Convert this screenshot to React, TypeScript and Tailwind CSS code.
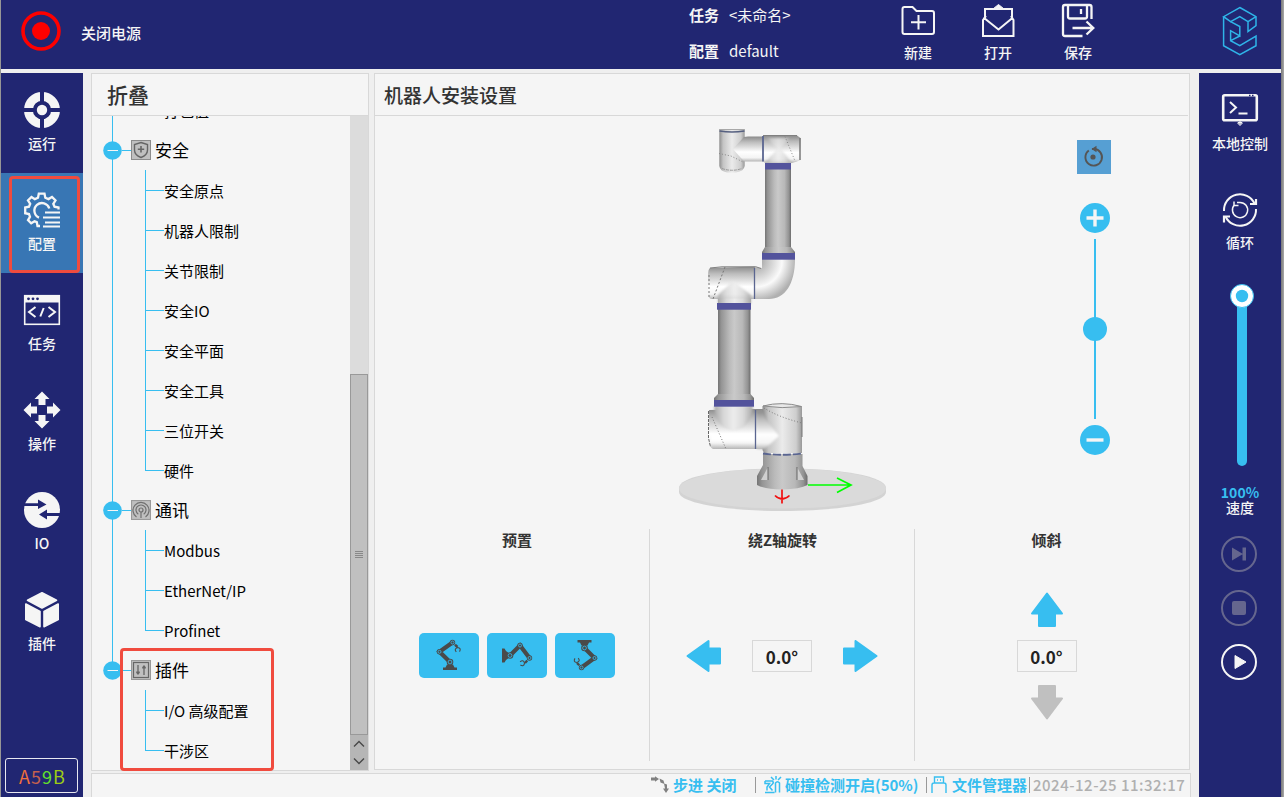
import React from "react";

const CYAN = "#37bef0";

/* ---------- left navigation ---------- */

const RunIcon = () => (
  <svg width="38" height="38" viewBox="0 0 38 38">
    <circle cx="19" cy="19" r="13.6" fill="none" stroke="#f5f5f5" strokeWidth="8.8" />
    <path d="M19 0V38M0 19H38" stroke="#212672" strokeWidth="4" />
    <circle cx="19" cy="19" r="5.2" fill="#f5f5f5" />
  </svg>
);

const GearListIcon = () => (
  <svg width="38" height="38" viewBox="0 -1 38 38" fill="none" stroke="#f5f5f5" strokeWidth="2.3">
    <path d="M17 35.500H14.500L13.800 31.700L11.500 30.800L8.200 32.800L5 29.600L7 26.300L6 23.500L2.200 22.700V17L6 16.200L7.200 13.300L5 10L8.500 6.500L11.800 8.600L15 7.200L15.800 3.200H21.500L22.300 7.200L25.500 8.600L29 6.500L32.500 10L30.300 13.300L31.500 16.200L35.500 17V19" transform="translate(0 -1.500)" />
    <path d="M16 25.600A7.600 7.600 0 1 1 26.300 16.500" />
    <path d="M22 20.500H37M20 25.500H37M22 30.500H37M20 34.500H37" strokeWidth="2" />
  </svg>
);

const CodeIcon = () => (
  <svg width="38" height="38" viewBox="0 0 38 38" fill="none" stroke="#f5f5f5">
    <rect x="1.700" y="4.700" width="34.600" height="28.600" strokeWidth="1.600" />
    <path d="M1 4H37V11.500H1Z" fill="#f5f5f5" stroke="none" />
    <g fill="#212672" stroke="none">
      <circle cx="5.500" cy="7.800" r="1.400" />
      <circle cx="10" cy="7.800" r="1.400" />
      <circle cx="14.500" cy="7.800" r="1.400" />
    </g>
    <path d="M12.500 16L6 21L12.500 26M25.500 16L32 21L25.500 26M20.700 17L17.300 25.500" strokeWidth="2" />
  </svg>
);

const MoveIcon = () => (
  <svg width="38" height="38" viewBox="0 0 38 38" fill="#f5f5f5">
    <path d="M19 .5L26.500 8H22.500V14H15.500V8H11.500ZM19 37.500L11.500 30H15.500V24H22.500V30H26.500ZM.5 19L8 11.500V15.500H14V22.500H8V26.500ZM37.500 19L30 26.500V22.500H24V15.500H30V11.500Z" />
  </svg>
);

const IoIcon = () => (
  <svg width="38" height="38" viewBox="0 0 38 38">
    <circle cx="19" cy="19" r="18" fill="#f5f5f5" />
    <path d="M0 12.300H15V8.500L23.500 13.500L15 18V15H0ZM38 25H24V28.500L16 23.500L24 18.500V22H38Z" fill="#212672" />
  </svg>
);

const CubeIcon = () => (
  <svg width="38" height="38" viewBox="0 0 38 38" fill="#f5f5f5" stroke="#f5f5f5" strokeWidth="1.600" strokeLinejoin="round">
    <path d="M19 1.800L33.500 9.300L19 17L4.500 9.300Z" />
    <path d="M2.800 13L17 20.500V35.800L2.800 28.500ZM35.200 13L21 20.500V35.800L35.200 28.500Z" />
  </svg>
);

const navItems = [
  { label: "运行", icon: <RunIcon /> },
  { label: "配置", icon: <GearListIcon />, active: true },
  { label: "任务", icon: <CodeIcon /> },
  { label: "操作", icon: <MoveIcon /> },
  { label: "IO", icon: <IoIcon /> },
  { label: "插件", icon: <CubeIcon /> },
];

function LeftNav() {
  return (
    <nav className="flex w-[82px] shrink-0 flex-col bg-[#212672]">
      {navItems.map((n) => (
        <div
          key={n.label}
          className={
            n.active
              ? "relative flex h-[100px] flex-col items-center bg-[#3876b4] pt-[18px]"
              : "relative flex h-[100px] flex-col items-center pt-[18px]"
          }
        >
          {n.icon}
          <span className="mt-1 text-sm leading-5 font-medium text-[#f5f5f5]">{n.label}</span>
          {n.active && <div className="absolute top-[3px] left-2 h-[97px] w-[71px] rounded border-3 border-[#f04b3e]" />}
        </div>
      ))}
      <div className="mt-[85px] ml-1 flex h-[35px] w-[73px] items-center justify-center rounded-[3px] border border-[#e8e8f0] pt-0.5 pl-0.5 text-[18px] tracking-[1px]">
        <span className="text-[#f2703a]">A</span>
        <span className="text-[#c4604e]">5</span>
        <span className="text-[#62e02c]">9</span>
        <span className="text-[#9ccc14]">B</span>
      </div>
    </nav>
  );
}

/* ---------- header ---------- */

const NewIcon = () => (
  <svg width="40" height="40" viewBox="0 0 40 40" fill="none" stroke="#f5f5f5" strokeWidth="2">
    <path d="M4.500 9Q4.500 7 6.500 7H14.500L18.500 11H34Q36 11 36 13V32Q36 34 34 34H6.500Q4.500 34 4.500 32Z" />
    <path d="M20.500 15V29.500M13 22.300H28" />
  </svg>
);

const OpenIcon = () => (
  <svg width="40" height="40" viewBox="0 0 40 40" fill="none" stroke="#f5f5f5" strokeWidth="2">
    <path d="M7 20V9H34V20" />
    <path d="M15.500 8.500L20.500 4.500L25.500 8.500Z" fill="#f5f5f5" strokeWidth="1" />
    <path d="M8 16L5 20V36H35.500V20L33 16M5.500 17.500L20.500 29.500L35 17.500" />
  </svg>
);

const SaveIcon = () => (
  <svg width="40" height="40" viewBox="0 0 40 40" fill="none" stroke="#f5f5f5" strokeWidth="2.300">
    <path d="M24.500 36H7Q5 36 5 34V7Q5 5 7 5H31.500Q33.500 5 33.500 7V19" />
    <path d="M10 5.500V16.500Q10 18.500 12 18.500H27Q29 18.500 29 16.500V5.500M23 9V14" />
    <path d="M14.500 28H35M28.500 21.500L35.300 28L28.500 34.500" />
  </svg>
);

const Logo = () => (
  <svg width="36" height="52" viewBox="1222 5 36 52" fill="none" stroke="#2fb4e8" strokeWidth="1.500">
    <path d="M1239.800 7.500L1256 16.700V25.500L1248 31.500V21.700L1239.800 16.700L1230.600 21.700L1223.600 16.700Z" />
    <path d="M1256 16.700L1248 21.700M1230.600 21.700L1239.800 26.500V36L1230.600 30.700V40.700L1239.800 45.700L1256 36V45.700L1239.800 54.700L1223.600 45.700V16.700M1230.600 40.700L1239.800 36" />
  </svg>
);

function Header() {
  return (
    <header className="flex h-[69px] w-[1280px] shrink-0 bg-[#212672] text-[15px] text-[#f5f5f5]">
      <svg className="mt-[10px] ml-[19px] shrink-0" width="42" height="42" viewBox="0 0 42 42">
        <circle cx="21" cy="21" r="18" fill="none" stroke="#fe0000" strokeWidth="3.600" />
        <circle cx="21" cy="21" r="9" fill="#fe0000" />
      </svg>
      <span className="mt-[21px] ml-[19px] w-[608px] shrink-0 leading-6 font-medium">关闭电源</span>
      <div className="flex w-[190px] shrink-0 flex-col gap-3 pt-[3px] leading-6">
        <div className="flex gap-[10px]">
          <b>任务</b>
          <span>&lt;未命名&gt;</span>
        </div>
        <div className="flex gap-[10px]">
          <b>配置</b>
          <span>default</span>
        </div>
      </div>
      <div className="-ml-px flex">
        {[
          { t: "新建", i: <NewIcon /> },
          { t: "打开", i: <OpenIcon /> },
          { t: "保存", i: <SaveIcon /> },
        ].map((b) => (
          <div key={b.t} className="flex w-20 shrink-0 flex-col items-center">
            {b.i}
            <span className="mt-0.5 text-sm leading-5 font-medium">{b.t}</span>
          </div>
        ))}
      </div>
      <div className="mt-[5px] ml-[104px]">
        <Logo />
      </div>
    </header>
  );
}

/* ---------- configuration tree ---------- */

const ShieldIcon = () => (
  <svg width="20" height="20" viewBox="0 0 20 20" fill="none" stroke="#666">
    <rect x=".5" y=".5" width="19" height="19" fill="#c0c0c0" stroke="#8c8c8c" />
    <path d="M10 2.500L16.500 4.500V10Q16.500 15 10 17.500Q3.500 15 3.500 10V4.500Z" strokeWidth="1.400" />
    <path d="M10 6V12.500M6.800 9.300H13.200" strokeWidth="1.600" />
  </svg>
);

const AntennaIcon = () => (
  <svg width="20" height="20" viewBox="0 0 20 20" fill="none" stroke="#707070" strokeWidth="1.200">
    <rect x=".5" y=".5" width="19" height="19" fill="#c0c0c0" stroke="#9a9a9a" />
    <circle cx="10" cy="10" r="2" />
    <path d="M7.300 14.200A5 5 0 1 1 12.700 14.200M5.500 17A8 8 0 1 1 14.500 17M10 12V18" />
  </svg>
);

const SlidersIcon = () => (
  <svg width="20" height="20" viewBox="0 0 20 20" fill="none" stroke="#666">
    <rect x=".5" y=".5" width="19" height="19" fill="#c0c0c0" stroke="#999" />
    <rect x="2.500" y="2.500" width="15" height="15" strokeWidth="1.200" />
    <path d="M7 5V14.500M13 5.500V15" strokeWidth="1.300" />
    <path d="M5.200 11.500H8.800V13L7 14.500L5.200 13ZM11.200 8.500H14.800V7L13 5.500L11.200 7Z" fill="#666" stroke="none" />
  </svg>
);

type SectionProps = { title: string; icon: React.ReactNode; items: string[]; last?: boolean };

function TreeSection({ title, icon, items, last }: SectionProps) {
  return (
    <div className={last ? "ml-5 border-l border-transparent" : "ml-5 border-l border-[#37bef0]"}>
      <div className="relative flex h-10 items-center">
        {last && <div className="absolute top-0 -left-px h-5 w-px bg-[#37bef0]" />}
        <svg className="relative mt-px -ml-[10px]" width="19" height="19" viewBox="0 0 19 19">
          <circle cx="9.500" cy="9.500" r="9.300" fill={CYAN} />
          <path d="M4.500 9.500H15" stroke="#f5f5f5" />
        </svg>
        <div className="mt-px h-px w-[9px] bg-[#37bef0]" />
        {icon}
        <span className="ml-1 text-[17px] leading-6">{title}</span>
      </div>
      {items.map((t, i) => (
        <div key={t} className="flex h-10 pl-8">
          <div className="w-[19px] shrink-0">
            <div className="h-[21px] border-b border-l border-[#37bef0]" />
            {i < items.length - 1 && <div className="h-[19px] border-l border-[#37bef0]" />}
          </div>
          <span className="text-[15px] leading-[41px]">{t}</span>
        </div>
      ))}
    </div>
  );
}

function TreePanel() {
  return (
    <section className="flex h-[698px] w-[278px] shrink-0 flex-col border border-[#d8d8d8] bg-[#f5f5f5]">
      <h2 className="h-[42px] shrink-0 border-b border-[#d8d8d8] pl-[15px] text-[21px] leading-[40px] font-medium text-[#333]">折叠</h2>
      <div className="flex min-h-0 flex-1">
        <div className="relative min-w-0 flex-1">
          <div className="h-full overflow-hidden text-black">
            <div className="-mt-[26px]">
              <div className="ml-5 h-10 border-l border-[#37bef0] pl-[51px] text-[15px] leading-[41px]">打包值</div>
              <TreeSection
                title="安全"
                icon={<ShieldIcon />}
                items={["安全原点", "机器人限制", "关节限制", "安全IO", "安全平面", "安全工具", "三位开关", "硬件"]}
              />
              <TreeSection title="通讯" icon={<AntennaIcon />} items={["Modbus", "EtherNet/IP", "Profinet"]} />
              <TreeSection title="插件" icon={<SlidersIcon />} items={["I/O 高级配置", "干涉区"]} last />
            </div>
          </div>
          <div className="absolute top-[532px] left-7 h-[123px] w-[154px] rounded border-3 border-[#f04b3e]" />
        </div>
        <div className="flex w-[18px] shrink-0 flex-col bg-[#dcdcdc]">
          <div className="mt-[258px] flex h-[361px] flex-col items-center justify-center gap-px border border-[#999] bg-[#c0c0c0]">
            <div className="h-px w-2 bg-[#888]" />
            <div className="h-px w-2 bg-[#888]" />
            <div className="h-px w-2 bg-[#888]" />
            <div className="h-px w-2 bg-[#888]" />
          </div>
          <svg width="18" height="35" viewBox="0 0 18 35" className="bg-[#b6b6b6]" fill="none" stroke="#484848" strokeWidth="1.400">
            <path d="M4 11.500L9 6.500L14 11.500M4 23.500L9 28.500L14 23.500" />
          </svg>
        </div>
      </div>
    </section>
  );
}

/* ---------- robot view ---------- */

const Robot = () => (
  <svg width="230" height="400" viewBox="670 120 230 400" className="shrink-0">
    <defs>
      <linearGradient id="tube">
        <stop offset="0" stopColor="#747474" />
        <stop offset=".1" stopColor="#949494" />
        <stop offset=".35" stopColor="#bababa" />
        <stop offset=".5" stopColor="#c9c9c9" />
        <stop offset=".75" stopColor="#b8b8b8" />
        <stop offset=".92" stopColor="#929292" />
        <stop offset="1" stopColor="#6c6c6c" />
      </linearGradient>
      <linearGradient id="shellX">
        <stop offset="0" stopColor="#8e8e8e" />
        <stop offset=".15" stopColor="#c4c4c4" />
        <stop offset=".5" stopColor="#ebebeb" />
        <stop offset=".85" stopColor="#cecece" />
        <stop offset="1" stopColor="#989898" />
      </linearGradient>
      <linearGradient id="shellY" x2="0" y2="1">
        <stop offset="0" stopColor="#8a8a8a" />
        <stop offset=".22" stopColor="#bcbcbc" />
        <stop offset=".45" stopColor="#e2e2e2" />
        <stop offset=".62" stopColor="#ffffff" />
        <stop offset=".85" stopColor="#f4f4f4" />
        <stop offset="1" stopColor="#b5b5b5" />
      </linearGradient>
      <linearGradient id="neck">
        <stop offset="0" stopColor="#a8a8a8" />
        <stop offset=".25" stopColor="#d8d8d8" />
        <stop offset=".5" stopColor="#ececec" />
        <stop offset=".75" stopColor="#dadada" />
        <stop offset="1" stopColor="#a8a8a8" />
      </linearGradient>
      <radialGradient id="elbow" gradientUnits="userSpaceOnUse" cx="756" cy="261" r="40">
        <stop offset="0" stopColor="#989898" />
        <stop offset=".25" stopColor="#c0c0c0" />
        <stop offset=".65" stopColor="#fafafa" />
        <stop offset="1" stopColor="#b0b0b0" />
      </radialGradient>
      <filter id="soft" x="-20%" y="-20%" width="140%" height="140%">
        <feGaussianBlur stdDeviation="1" />
      </filter>
    </defs>

    {/* mounting plate */}
    <path d="M679 488C679 476 725 468.500 782.500 468.500S886 476 886 488V492C886 503 839 511 782.500 511S679 503 679 492Z" fill="#d3d3d3" />
    <ellipse cx="782.500" cy="488.500" rx="103.500" ry="20" fill="#dadada" />

    {/* wrist */}
    <path d="M719.300 129H744.700V166Q744 171 736 172.500H727Q720 171 719.300 166Z" fill="url(#shellX)" />
    <path d="M744 137L748 136.500H764V161.500H744L733 149Z" fill="url(#shellY)" />
    <path d="M719.500 129.500H744.500" stroke="#a8a8a8" />
    <path d="M719.500 131Q732 133 744.500 131" fill="none" stroke="#566080" strokeWidth="1.500" />
    <path d="M719 153.500L731 156L744 162.500" fill="none" stroke="#888" strokeDasharray="1 2" />
    <path d="M722 168.500Q732 172 742 168.500" fill="none" stroke="#999" strokeDasharray="3 1" />
    <path d="M763 135.500H797L800.500 138V160L797 161.500L792 163H765L763 161Z" fill="url(#shellY)" />
    <path d="M766 138L777 149L766 162V163H791V162L781 149L790 138Z" fill="url(#neck)" filter="url(#soft)" opacity=".75" />
    <path d="M763 135.500H797" stroke="#808080" />
    <path d="M785 136.500L795 161" stroke="#888" strokeDasharray="1 2" />
    <path d="M800 138V160" stroke="#777" strokeWidth="1.500" />
    <path d="M763 136V161.500" stroke="#5a6590" strokeWidth="1.800" />

    {/* forearm */}
    <rect x="765" y="168" width="26" height="83" fill="url(#tube)" />
    <rect x="765" y="163" width="26" height="6.500" fill="#53539c" />
    <path d="M765 247L762 252V254H795V252L791 247Z" fill="url(#tube)" />

    {/* elbow */}
    <path d="M762 259H795C795 284 785 299 769 299H752V267L762 268Z" fill="url(#elbow)" />
    <rect x="762" y="253" width="33" height="6.700" fill="#53539c" />
    <path d="M710 268L755 266.500V299H711Q707.500 298 708 290V276Q708 269 710 268Z" fill="url(#shellY)" />
    <path d="M710 268L722 266.800H756L761 268.500" fill="none" stroke="#808080" />
    <path d="M733 281L718 295V304H751V295Z" fill="url(#neck)" filter="url(#soft)" opacity=".8" />
    <rect x="718" y="298.500" width="33" height="5" fill="url(#neck)" />
    <path d="M725 267L713 299M709 275V298" stroke="#777" strokeDasharray="2 2" />
    <path d="M754.500 268V299" stroke="#5a6590" strokeWidth="1.300" />

    {/* upper arm */}
    <rect x="718" y="308" width="32.500" height="90" fill="url(#tube)" />
    <rect x="717" y="303" width="34" height="6.700" fill="#53539c" />
    <path d="M718 394L714 398V401H754V398L750.500 394Z" fill="url(#tube)" />

    {/* shoulder */}
    <path d="M709 410L755 409H770V449H713Q709.500 448 709 440Z" fill="url(#shellY)" />
    <path d="M714 406H753C752 420 745 429 733 430C721 429 715 420 714 406Z" fill="url(#neck)" filter="url(#soft)" />
    <path d="M711 434H757V441H711Z" fill="#fff" filter="url(#soft)" />
    <path d="M708.500 411V438L710.500 447" fill="none" stroke="#666" strokeDasharray="3 1" />
    <path d="M712 417L726 449" stroke="#777" strokeDasharray="1 2" />
    <rect x="714" y="400" width="40" height="6.700" fill="#53539c" />
    <path d="M762.500 406Q782 401 802 406.500V453H764L762.500 450Z" fill="url(#shellX)" />
    <path d="M757 411H763L766 419L779 436L765 449H757Z" fill="url(#shellY)" filter="url(#soft)" />
    <path d="M755.500 410V449" stroke="#5a6590" strokeWidth="1.300" />
    <path d="M763 406Q782 401 801.500 406.500Q782 409 763 406" fill="#e8e8e8" stroke="#8c8c8c" />
    <path d="M764 408Q778 417 802 423" fill="none" stroke="#777" strokeDasharray="1 2" />
    <path d="M802 417V437" stroke="#777" />

    {/* base */}
    <path d="M763 454H802.500V466L807.500 476V485Q800 489 782 489.500Q764 489 757 485V476L763 465Z" fill="url(#tube)" />
    <path d="M763 453.500Q782 456 802 453.500" fill="none" stroke="#5a6590" strokeWidth="1.800" strokeDasharray="8 2" />
    <path d="M768 467L761 480H768ZM797 467L804 480H797Z" fill="#d0d0d0" />
    <path d="M768 467V480M797 467V480" stroke="#666" />

    <path d="M808 485H850M837 478L851 485L837 492.500" fill="none" stroke="#00ff00" strokeWidth="1.700" />
    <path d="M782 489.500V503.500M775 495.500Q782 502.500 789.500 495.500" fill="none" stroke="#f01010" strokeWidth="1.700" />
  </svg>
);

function ZoomControl() {
  return (
    <div className="flex w-9 flex-col items-center">
      <div className="mr-[2px] flex h-[34px] w-[34px] items-center justify-center bg-[#569fd3]">
        <svg width="24" height="24" viewBox="0 0 24 24" fill="none" stroke="#555" strokeWidth="1.900">
          <path d="M6.800 5.600A8.300 8.300 0 1 0 12 4H10" />
          <path d="M9.500 4L14.500 .8V7.200Z" fill="#555" stroke="none" />
          <circle cx="11" cy="12" r="2.600" fill="#555" stroke="none" />
        </svg>
      </div>
      <svg className="mt-[29px]" width="30" height="30" viewBox="0 0 30 30">
        <circle cx="15" cy="15" r="15" fill={CYAN} />
        <path d="M15 6.500V23.500M6.500 15H23.500" stroke="#f5f5f5" strokeWidth="3.400" />
      </svg>
      <div className="relative mt-[6px] h-[180px] w-0.5 bg-[#37bef0]">
        <div className="absolute top-[78px] -left-[11px] h-6 w-6 rounded-full bg-[#37bef0]" />
      </div>
      <svg className="mt-[6px]" width="30" height="30" viewBox="0 0 30 30">
        <circle cx="15" cy="15" r="15" fill={CYAN} />
        <path d="M6.500 15H23.500" stroke="#f5f5f5" strokeWidth="3.400" />
      </svg>
    </div>
  );
}

/* ---------- presets and angles ---------- */

type Pt = [number, number];

function ArmGlyph({ base, joints, grip, angle }: { base: string; joints: Pt[]; grip: Pt; angle: number }) {
  const [a, b, c] = joints;
  return (
    <svg width="60" height="45" viewBox="0 0 60 45" fill="none" stroke="#4a4a4a">
      <path d={base} fill="#4a4a4a" stroke="none" />
      <path d={`M${a[0]} ${a[1]}L${b[0]} ${b[1]}L${c[0]} ${c[1]}`} strokeWidth="4.200" />
      {joints.map((j, i) => (
        <g key={i}>
          <circle cx={j[0]} cy={j[1]} r={i === 0 ? 3.3 : 2.7} fill="#4a4a4a" stroke="none" />
          <circle cx={j[0]} cy={j[1]} r={i === 0 ? 1.9 : 1.5} fill="#4a4a4a" stroke="#37bef0" strokeWidth=".8" />
        </g>
      ))}
      <path d={`M${c[0] + (grip[0] - c[0]) * 0.5} ${c[1] + (grip[1] - c[1]) * 0.5}L${grip[0]} ${grip[1]}`} strokeWidth="2.400" />
      <g transform={`translate(${grip[0]} ${grip[1]}) rotate(${angle})`}>
        <path d="M-1.600 4.800Q-4 1.500 0 .5Q4 1.500 1.600 4.800" strokeWidth="1.100" />
      </g>
    </svg>
  );
}

const presets = [
  <ArmGlyph base="M24 37V34.500H26.500L28 31.500H34L35.500 34.500H38V37Z" joints={[[31, 29], [20.5, 18.8], [33.5, 9.5]]} grip={[38.500, 14]} angle={-5} />,
  <ArmGlyph base="M15 15.500H17.500L19 18L21 19.500V25.500L19 27L17.500 29.500H15Z" joints={[[23, 22.5], [33, 12.5], [42.5, 25]]} grip={[38, 30]} angle={85} />,
  <ArmGlyph base="M22.500 7H36.500V9.500H34L32.500 12.500H26.500L25 9.500H22.500Z" joints={[[29.5, 15], [39.5, 25], [26.5, 34.5]]} grip={[22, 30]} angle={175} />,
];

const LeftArrow = () => (
  <svg width="35" height="34" viewBox="0 0 35 34">
    <path d="M1.500 17L22.500 2V9.500H34V24.500H22.500V32Z" fill={CYAN} stroke={CYAN} strokeWidth="2" strokeLinejoin="round" />
  </svg>
);

const UpArrow = ({ color }: { color: string }) => (
  <svg width="34" height="36" viewBox="0 0 34 36">
    <path d="M17 1.500L32 21.500H25V34H9V21.500H2Z" fill={color} stroke={color} strokeWidth="2" strokeLinejoin="round" />
  </svg>
);

const AngleBox = () => (
  <div className="flex h-8 w-[60px] items-center justify-center border border-[#d8d8d8] pt-px text-[17px] font-bold text-[#222]">0.0°</div>
);

function MainPanel() {
  return (
    <section className="flex h-[697px] w-[816px] shrink-0 flex-col border border-[#d8d8d8] bg-[#f5f5f5]">
      <h2 className="mr-px h-[42px] shrink-0 border-b border-[#d8d8d8] pl-[9px] text-[19px] leading-[42px] font-medium text-[#333]">机器人安装设置</h2>
      <div className="flex h-[413px] shrink-0 pl-[295px]">
        <div className="pt-1">
          <Robot />
        </div>
        <div className="pt-6 pl-[177px]">
          <ZoomControl />
        </div>
      </div>
      <div className="flex h-[232px] pl-[9px] text-[15px] text-[#333]">
        <div className="flex w-[265px] flex-col items-center">
          <b className="-mt-px ml-px leading-6">预置</b>
          <div className="mt-[81px] flex gap-2">
            {presets.map((p, i) => (
              <div key={i} className="h-[45px] w-[60px] overflow-hidden rounded-[5px] bg-[#37bef0]">
                {p}
              </div>
            ))}
          </div>
        </div>
        <div className="flex w-[265px] flex-col items-center border-l border-[#d8d8d8]">
          <b className="-mt-px ml-px leading-6">绕Z轴旋转</b>
          <div className="mt-[87px] flex items-center gap-[31px]">
            <LeftArrow />
            <AngleBox />
            <div className="-scale-x-100">
              <LeftArrow />
            </div>
          </div>
        </div>
        <div className="flex w-[266px] flex-col items-center border-l border-[#d8d8d8] pr-[2px]">
          <b className="-mt-px leading-6">倾斜</b>
          <div className="mt-10 flex flex-col items-center gap-3">
            <UpArrow color={CYAN} />
            <AngleBox />
            <div className="-scale-y-100">
              <UpArrow color="#c0c0c0" />
            </div>
          </div>
        </div>
      </div>
    </section>
  );
}

/* ---------- status bar ---------- */

const Sep = () => <div className="h-4 w-px shrink-0 bg-[#999]" />;

function StatusBar() {
  return (
    <footer className="mt-0.5 flex h-[26px] w-[1100px] items-center border border-[#d8d8d8] bg-[#f5f5f5] pl-[559px] text-[15px] font-bold whitespace-nowrap text-[#37bef0]">
      <svg className="shrink-0" width="18" height="18" viewBox="0 0 18 18" fill="#808080">
        <path d="M0 1.500H4V.3L8 3L4 5.700V4.500H0ZM8.500 2.500L12.500 4.500L13.500 8L9.500 6.500ZM13 7.500L16 8.500V12.500H18L15 17L12 12.500H14Z" />
      </svg>
      <span className="ml-1 w-[82px] shrink-0">步进 关闭</span>
      <Sep />
      <svg className="ml-2 shrink-0" width="18" height="18" viewBox="0 0 18 18" fill="none" stroke={CYAN} strokeWidth="1.500">
        <path d="M1 5H8.500Q10 6.500 8.500 8L5.500 11L8.500 14.500M1 5V7.500H5.500L3 11V14.500M1 16.500H10.500M11.500 16.500V7Q13.500 4.500 15.500 7V16.500M7 1L10 4M12 0V3.500M17 1L14 4" />
      </svg>
      <span className="ml-[3px] w-[141px] shrink-0">碰撞检测开启(50%)</span>
      <Sep />
      <svg className="ml-1 shrink-0" width="16" height="18" viewBox="0 0 16 18" fill="none" stroke={CYAN} strokeWidth="1.400">
        <path d="M3.500 7V1H12.500V7M1 17V9Q1 7 3 7H13Q15 7 15 9V17M6 4H7M9 4H10" />
      </svg>
      <span className="ml-[5px] w-[77px] shrink-0">文件管理器</span>
      <Sep />
      <span className="ml-[3px] font-medium tracking-[0.5px] text-[#b0b0b0]">2024-12-25 11:32:17</span>
    </footer>
  );
}

/* ---------- right bar ---------- */

function RightBar() {
  return (
    <aside className="flex w-[82px] shrink-0 flex-col items-center bg-[#212672] text-sm leading-5 font-medium text-[#f5f5f5]">
      <svg className="mt-[18px]" width="38" height="38" viewBox="0 0 38 38" fill="none" stroke="#f5f5f5">
        <rect x="2.200" y="4.200" width="33.600" height="25" rx="1.500" strokeWidth="2.600" />
        <path d="M28 4.500H29.500M31 4.500H32.500" stroke="#212672" strokeWidth="1.500" />
        <path d="M9 11L15 16.500L9 22M17.500 22.500H26.500" strokeWidth="2" />
        <path d="M19 30V35M17 31.500H21V33H17Z" />
      </svg>
      <span className="mt-1">本地控制</span>
      <svg className="mt-[38px]" width="38" height="38" viewBox="0 0 38 38" fill="none" stroke="#f5f5f5" strokeWidth="2">
        <path d="M3 20A16 16 0 0 1 33.500 12.500M35 18A16 16 0 0 1 4.500 25.500" />
        <path d="M29 13H35V8M3 31.500V25.500H9" strokeWidth="2.200" />
        <path d="M13.500 13.800A7.600 7.600 0 1 0 19 11.400H16M13 10.500V14.500H17.500" strokeWidth="1.500" />
      </svg>
      <span className="mt-[3px]">循环</span>
      <svg className="mt-[30px] ml-1" width="26" height="186" viewBox="0 0 26 186">
        <path d="M13 16V179" stroke={CYAN} strokeWidth="10" strokeLinecap="round" />
        <circle cx="13" cy="14" r="11.500" fill="#fff" stroke={CYAN} />
        <circle cx="13" cy="14" r="6.200" fill={CYAN} />
      </svg>
      <span className="mt-4 h-[15px] leading-4 font-bold text-[#37bef0]">100%</span>
      <span className="h-4 leading-4">速度</span>
      <div className="mr-[2px] mt-[21px] flex flex-col gap-[18px]">
        <svg width="36" height="36" viewBox="0 0 36 36" fill="#65668e">
          <circle cx="18" cy="18" r="17" fill="none" stroke="#65668e" strokeWidth="2" />
          <path d="M11 11.500L22 18L11 24.500ZM21.500 11.500H25V24.500H21.500Z" />
        </svg>
        <svg width="36" height="36" viewBox="0 0 36 36" fill="#65668e">
          <circle cx="18" cy="18" r="17" fill="none" stroke="#65668e" strokeWidth="2" />
          <rect x="11" y="11" width="14" height="14" rx="2" />
        </svg>
        <svg width="36" height="36" viewBox="0 0 36 36" fill="#f5f5f5">
          <circle cx="18" cy="18" r="17" fill="none" stroke="#f5f5f5" strokeWidth="2" />
          <path d="M14 11.500L25 18L14 24.500Z" stroke="#f5f5f5" strokeLinejoin="round" />
        </svg>
      </div>
    </aside>
  );
}

export default function App() {
  return (
    <div className="flex h-[797px] w-[1284px] overflow-hidden border-l border-[#969696] bg-[#efefef] font-['Noto_Sans_CJK_SC',sans-serif]">
      <div className="flex w-[1280px] shrink-0 flex-col">
        <Header />
        <div className="mt-1 flex h-[724px] shrink-0">
          <LeftNav />
          <div className="ml-2 flex w-[1108px] shrink-0 flex-col">
            <div className="flex h-[698px] shrink-0 gap-[5px]">
              <TreePanel />
              <MainPanel />
            </div>
            <StatusBar />
          </div>
          <RightBar />
        </div>
      </div>
      <div className="flex-1 bg-gradient-to-r from-[#777] to-[#aaa]" />
    </div>
  );
}
